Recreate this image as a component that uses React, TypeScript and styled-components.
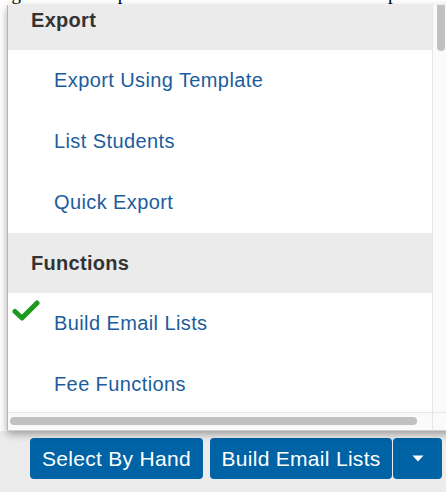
import React from 'react'
import styled, { createGlobalStyle } from 'styled-components'

const GlobalStyle = createGlobalStyle`
  html, body {
    margin: 0;
    padding: 0;
    background: #ffffff;
    overflow: hidden;
  }
  body {
    font-family: "Liberation Sans", Arial, Helvetica, sans-serif;
  }
`

type Entry = { label: string; checked?: boolean }
type Group = { title: string; entries: Entry[] }

const groups: Group[] = [
  {
    title: 'Export',
    entries: [{ label: 'Export Using Template' }, { label: 'List Students' }, { label: 'Quick Export' }],
  },
  {
    title: 'Functions',
    entries: [{ label: 'Build Email Lists', checked: true }, { label: 'Fee Functions' }],
  },
]

const Check = () => (
  <CheckMark width="28" height="22" viewBox="0 0 28 22">
    <path
      d="M3 11.5 L10 18 L25 3"
      fill="none"
      stroke="#1d9a1d"
      strokeWidth="5"
      strokeLinecap="round"
      strokeLinejoin="round"
    />
  </CheckMark>
)

const Caret = () => (
  <svg width="12" height="7" viewBox="0 0 12 7">
    <path d="M0.5 0.5 H11.5 L6 6.5 Z" fill="#ffffff" />
  </svg>
)

export default function App() {
  return (
    <Page>
      <GlobalStyle />
      <Intro>
        <IntroText>right hand side pull down the arrow to a different option</IntroText>
      </Intro>
      <Menu>
        <List>
          <Scroller>
            {groups.map((group) => (
              <React.Fragment key={group.title}>
                <GroupTitle>{group.title}</GroupTitle>
                {group.entries.map((entry) => (
                  <Item key={entry.label}>
                    {entry.checked && <Check />}
                    {entry.label}
                  </Item>
                ))}
              </React.Fragment>
            ))}
          </Scroller>
        </List>
        <VTrack>
          <VThumb />
        </VTrack>
        <HTrack>
          <HThumb />
        </HTrack>
        <Corner />
      </Menu>
      <Actions>
        <Button $width={173}>Select By Hand</Button>
        <SplitGroup>
          <Button $width={182}>Build Email Lists</Button>
          <Button $width={49}>
            <Caret />
          </Button>
        </SplitGroup>
      </Actions>
    </Page>
  )
}

const Page = styled.div`
  width: 446px;
  height: 492px;
  display: flex;
  flex-direction: column;
  overflow: hidden;
`

const Intro = styled.div`
  height: 5px;
  overflow: hidden;
  flex-shrink: 0;
`

const IntroText = styled.div`
  margin-top: -16px;
  font-family: "Liberation Serif", "Times New Roman", serif;
  font-size: 19px;
  line-height: 20px;
  color: #000;
  white-space: nowrap;
`

const Menu = styled.div`
  position: relative;
  z-index: 1;
  margin-left: 7px;
  width: 445px;
  height: 425px;
  flex-shrink: 0;
  display: grid;
  grid-template-columns: 424px 15px;
  grid-template-rows: 1fr 18px;
  grid-template-areas:
    'list vbar'
    'hbar corner';
  background: #ffffff;
  border-left: 1px solid #b4b4b4;
  border-bottom: 1px solid #d0d0d0;
  box-shadow: 0 3px 8px rgba(0, 0, 0, 0.35);
`

const List = styled.div`
  grid-area: list;
  overflow: hidden;
`

const Scroller = styled.div`
  margin-top: -15px;
`

const GroupTitle = styled.div`
  height: 60px;
  display: flex;
  align-items: center;
  padding-left: 23px;
  background: #ebebeb;
  color: #333333;
  font-size: 20px;
  font-weight: bold;
  letter-spacing: 0.3px;
`

const Item = styled.div`
  position: relative;
  height: 61px;
  display: flex;
  align-items: center;
  padding-left: 46px;
  color: #1b5d9c;
  font-size: 20px;
  letter-spacing: 0.4px;
`

const CheckMark = styled.svg`
  position: absolute;
  left: 4px;
  top: 7px;
`

const VTrack = styled.div`
  grid-area: vbar;
  background: #fafafa;
  border-left: 1px solid #e6e6e6;
  padding: 0 3px 0 4px;
`

const VThumb = styled.div`
  width: 8px;
  height: 46px;
  border-radius: 0 0 4px 4px;
  background: #c1c1c1;
`

const HTrack = styled.div`
  grid-area: hbar;
  background: #fafafa;
  border-top: 1px solid #e6e6e6;
  padding: 4px 0 0 2px;
`

const HThumb = styled.div`
  width: 407px;
  height: 8px;
  border-radius: 4px;
  background: #c1c1c1;
`

const Corner = styled.div`
  grid-area: corner;
  background: #fafafa;
  border-left: 1px solid #e6e6e6;
  border-top: 1px solid #e6e6e6;
`

const Actions = styled.div`
  flex: 1;
  display: flex;
  align-items: flex-start;
  gap: 7px;
  padding: 7px 0 0 30px;
  background: #ececec;
`

const SplitGroup = styled.div`
  display: flex;
  gap: 1px;
`

const Button = styled.button<{ $width: number }>`
  width: ${(p) => p.$width}px;
  height: 41px;
  padding: 0;
  display: flex;
  align-items: center;
  justify-content: center;
  border: none;
  border-radius: 4px;
  background: #0063a6;
  color: #ffffff;
  font-family: "Liberation Sans", Arial, Helvetica, sans-serif;
  font-size: 21px;
  letter-spacing: 0.3px;
  cursor: pointer;
`
